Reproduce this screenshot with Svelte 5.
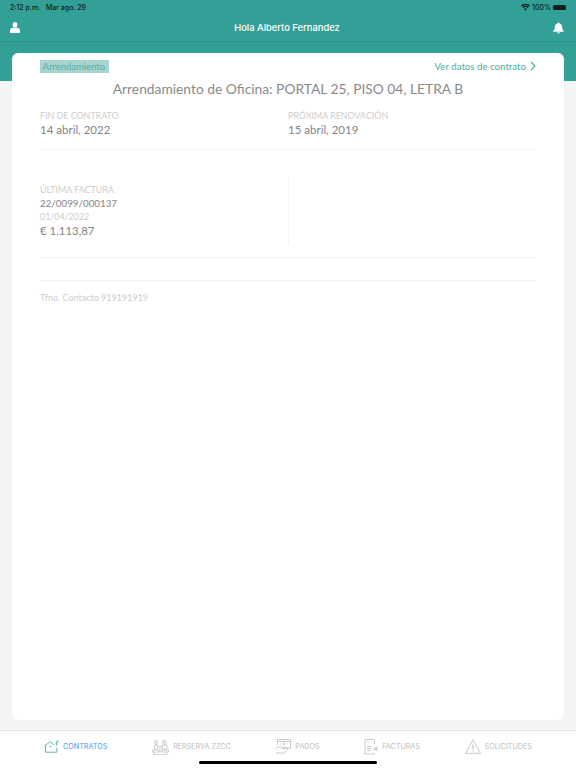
<script lang="ts">
	const tabs = [
		{ id: 'home', label: 'CONTRATOS', active: true },
		{ id: 'hall', label: 'RERSERVA ZZCC', active: false },
		{ id: 'pay', label: 'PAGOS', active: false },
		{ id: 'bill', label: 'FACTURAS', active: false },
		{ id: 'warn', label: 'SOLICITUDES', active: false }
	];
</script>

<div class="page">
	<header class="top">
		<div class="status">
			<span>2:12 p.m.&nbsp;&nbsp; Mar ago. 29</span>
			<span class="status__right">
				<svg viewBox="0 0 16 12" width="9" height="7"><path d="M8 11.5 5.6 8.6a3.6 3.6 0 0 1 4.8 0zM3.900 6.800l-1.500-1.700a8.600 8.600 0 0 1 11.200 0l-1.500 1.700a6.300 6.300 0 0 0-8.200 0zM1.600 4.100 0 2.400a12 12 0 0 1 16 0l-1.600 1.700a9.800 9.800 0 0 0-12.800 0z" fill="#10201e" /></svg>
				100%
				<span class="battery"></span>
			</span>
		</div>
		<div class="nav">
			<svg viewBox="0 0 10 11" width="10" height="11"><ellipse cx="5" cy="2.800" rx="2.400" ry="2.800" fill="#fff" /><path d="M0 11V8.500C0 6.800 1.300 5.800 3 5.800h4c1.700 0 3 1 3 2.700V11z" fill="#fff" /></svg>
			<span class="nav__title">Hola Alberto Fernandez</span>
			<svg class="nav__bell" viewBox="0 0 12 12" width="11" height="12"><path d="M6 0c.6 0 1 .4 1 1 2 .4 3 2 3 4 0 2.400.7 3.400 2 5H0c1.300-1.600 2-2.600 2-5 0-2 1-3.600 3-4 0-.6.4-1 1-1zM4.500 10.700h3a1.500 1.300 0 0 1-3 0z" fill="#fff" /></svg>
		</div>
	</header>

	<main class="card">
		<div class="card__head">
			<span class="tag">Arrendamiento</span>
			<span class="link">Ver datos de contrato
				<svg viewBox="0 0 6 10" width="6" height="10"><path d="M1 1l4 4-4 4" fill="none" stroke="currentColor" stroke-width="1.100" /></svg>
			</span>
		</div>
		<h1>Arrendamiento de Oficina: PORTAL 25, PISO 04, LETRA B</h1>

		<section class="dates">
			<div>
				<div class="label">FIN DE CONTRATO</div>
				<div class="value value--big">14 abril, 2022</div>
			</div>
			<div>
				<div class="label">PRÓXIMA RENOVACIÓN</div>
				<div class="value value--big">15 abril, 2019</div>
			</div>
		</section>

		<section class="invoice">
			<div class="invoice__col">
				<div class="label">ÚLTIMA FACTURA</div>
				<div class="value">22/0099/000137</div>
				<div class="label">01/04/2022</div>
				<div class="value value--amount">€ 1.113,87</div>
			</div>
			<div class="invoice__col invoice__col--empty"></div>
		</section>

		<div class="phone">Tfno. Contacto 919191919</div>
	</main>

	<nav class="tabs">
		{#each tabs as tab}
			<div class="tab" class:tab--active={tab.active}>
				{#if tab.id === 'home'}
					<svg class="icon" viewBox="0 0 15 13" width="15" height="13" fill="none" stroke="currentColor" stroke-width="0.9">
						<path d="M.5 6 6 1.800 10 4.800M1.500 5.500V12.200H12.800V7.500" />
						<path d="M5.500 6.500h2" />
						<path d="M14.500 .8a2.800 2.800 0 0 0-1.600 4.600" stroke-width="1.200" />
					</svg>
				{:else if tab.id === 'hall'}
					<svg class="icon" viewBox="0 0 17 16" width="17" height="16" fill="none" stroke="currentColor" stroke-width="0.7">
						<path d="M4 6 2 3.500 4 1l2 2.500zM12 6l-2-2.500L12 1l3 2.500zM2.500 6h3v4h-3zM10.500 6h4.500v4h-4.500zM5.500 7.500h5" />
						<path d="M.5 11h16v2H.5zM2 13v2.500h13V13M4 5V1.500M12 5V1.500M7 9h2M7 11v2M10 11v2" />
					</svg>
				{:else if tab.id === 'pay'}
					<svg class="icon" viewBox="0 0 16 15" width="16" height="15" fill="none" stroke="currentColor" stroke-width="0.8">
						<path d="M2.500 6V.5h13v8.500H8.500M2.500 2.500h13" />
						<circle cx="9" cy="5" r="1" />
						<path d="M5 5h1M12 5h1" />
						<path d="M.5 10c2-2 3.500-2.500 5-2h3c1.200 0 1.200 1.800 0 1.800H6.500M9 9.800l3-.8c1-.2 1.500.8.800 1.500L9 14H1" />
					</svg>
				{:else if tab.id === 'bill'}
					<svg class="icon" viewBox="0 0 14 16" width="14" height="16" fill="none" stroke="currentColor" stroke-width="0.8">
						<path d="M1 5.500V.5h9.500v5M1 5.500V15.500l1.500-1 1.500 1 1.500-1 1.500 1 1.500-1 1.500 1v-1.500" />
						<path d="M3 3h2M3 7.500h4M3 9.500h4M3 11.500h4" />
						<path d="M13.500 7.200a2.800 2.800 0 0 0 0 5M13.500 9h-4M13.500 10.500h-4" />
					</svg>
				{:else}
					<svg class="icon" viewBox="0 0 16 15" width="16" height="15" fill="none" stroke="currentColor" stroke-width="0.8">
						<path d="M8 .8 .6 14.400h14.800z" stroke-linejoin="round" />
						<path d="M8 5.500v5M8 11.800v1" stroke-width="1" />
					</svg>
				{/if}
				<span>{tab.label}</span>
			</div>
		{/each}
		<div class="home-bar"></div>
	</nav>
</div>

<style>
	:global(body) {
		margin: 0;
	}
	.page {
		position: relative;
		width: 576px;
		height: 768px;
		overflow: hidden;
		display: flex;
		flex-direction: column;
		background: #f3f4f6;
		font-family: 'Lato', 'Liberation Sans', sans-serif;
	}
	.top {
		height: 81px;
		margin-bottom: -28px;
		flex: none;
		background: #32a096;
	}
	.status {
		height: 14px;
		padding: 0 10px;
		display: flex;
		align-items: center;
		justify-content: space-between;
		font-family: 'Inter', sans-serif;
		font-size: 7px;
		font-weight: 500;
		color: #10201e;
	}
	.status__right {
		display: flex;
		align-items: center;
		gap: 2px;
	}
	.battery {
		width: 13px;
		height: 5px;
		background: #10201e;
		border-radius: 1.500px;
	}
	.nav {
		height: 27px;
		padding: 0 12px 0 10px;
		display: grid;
		grid-template-columns: 1fr auto 1fr;
		align-items: center;
		border-bottom: 1px solid #2d9389;
	}
	.nav__title {
		font-family: 'Inter', sans-serif;
		font-size: 9.400px;
		font-weight: 500;
		color: #fff;
	}
	.nav__bell {
		justify-self: end;
	}
	.card {
		position: relative;
		flex: none;
		height: 667px;
		margin: 0 12px;
		padding: 0 28px;
		box-sizing: border-box;
		background: #fff;
		border-radius: 6px;
	}
	.card__head {
		height: 26px;
		display: flex;
		align-items: center;
		justify-content: space-between;
	}
	.tag {
		width: 69px;
		box-sizing: border-box;
		padding-left: 2.500px;
		height: 13px;
		line-height: 13px;
		font-size: 9.500px;
		color: #4fb0a6;
		background: #a7d4cf;
	}
	.link {
		display: flex;
		align-items: center;
		gap: 4px;
		font-size: 9.700px;
		color: #45b0a6;
	}
	h1 {
		margin: 2px 0 0;
		font-size: 13.800px;
		line-height: 16px;
		font-weight: 400;
		text-align: center;
		color: #8a8a8a;
	}
	.dates {
		margin-top: 12px;
		height: 40px;
		display: grid;
		grid-template-columns: 1fr 1fr;
		border-bottom: 1px solid #f0f0f0;
	}
	.label {
		font-size: 8.900px;
		line-height: 13px;
		color: #cdcdcd;
	}
	.value {
		font-size: 9.800px;
		line-height: 14px;
		color: #858585;
	}
	.value--big {
		font-size: 11.500px;
		line-height: 15px;
	}
	.value--amount {
		font-size: 11.400px;
		line-height: 16px;
	}
	.invoice {
		margin-top: 27px;
		height: 80px;
		display: grid;
		grid-template-columns: 1fr 1fr;
		border-bottom: 1px solid #f0f0f0;
		align-items: start;
	}
	.invoice__col {
		padding-top: 6px;
	}
	.invoice__col--empty {
		height: 68px;
		padding: 0;
		border-left: 1px solid #f4f4f4;
	}
	.phone {
		margin-top: 22px;
		padding-top: 10px;
		border-top: 1px solid #f0f0f0;
		font-size: 9px;
		line-height: 13px;
		color: #cdcdcd;
	}
	.tabs {
		position: absolute;
		left: 0;
		right: 0;
		bottom: 0;
		height: 38px;
		box-sizing: border-box;
		padding: 0 44px 6px;
		display: flex;
		justify-content: space-between;
		align-items: center;
		background: #fff;
		border-top: 1px solid #e4e5e8;
	}
	.tab {
		display: flex;
		align-items: center;
		gap: 4px;
		font-family: 'Inter', sans-serif;
		font-size: 7.200px;
		color: #bdbdbd;
	}
	.tab--active {
		color: #3f9cf0;
	}
	.tab--active .icon {
		color: #52b3a9;
	}
	.home-bar {
		position: absolute;
		left: 199px;
		bottom: 4px;
		width: 178px;
		height: 3px;
		border-radius: 2px;
		background: #000;
	}
</style>
